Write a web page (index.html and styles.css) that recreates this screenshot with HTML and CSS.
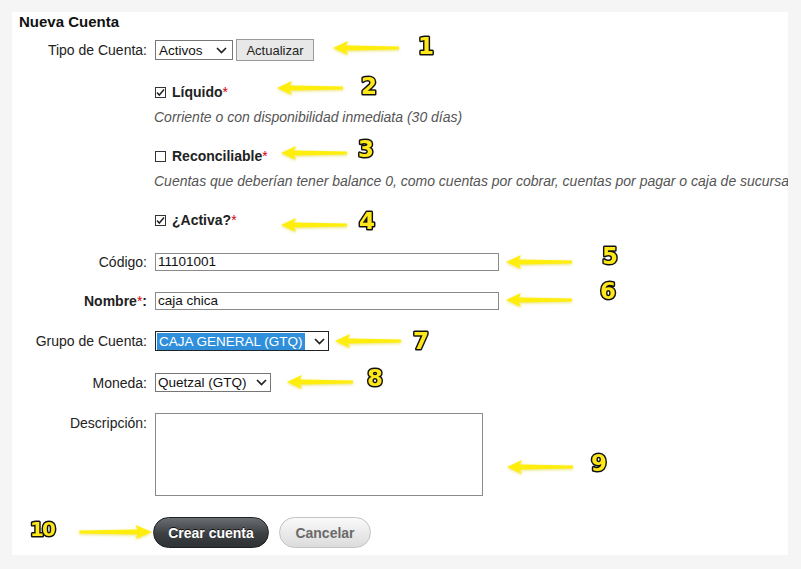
FILE: index.html
```html
<!DOCTYPE html>
<html lang="es">

<head>
  <meta charset="UTF-8">
  <meta name="viewport" content="width=device-width, initial-scale=1.0">
  <title>Nueva Cuenta</title>
  <link rel="stylesheet" href="styles.css">
</head>

<body>
  <div class="panel">
    <h2 class="title">Nueva Cuenta</h2>

    <div class="row row-type">
      <label class="label">Tipo de Cuenta:</label>
      <div class="field">
        <div class="select select-type">
          <span>Activos</span>
          <svg class="chevron" viewBox="0 0 11 7"><path d="M1 1l4.5 4.5L10 1" /></svg>
        </div>
        <button class="btn-plain">Actualizar</button>
      </div>
    </div>

    <div class="row row-check">
      <span></span>
      <div class="field">
        <span class="check"><svg viewBox="0 0 11 11"><path d="M2 5.5l2.3 2.5L9 2.5" /></svg></span>
        <b>Líquido</b><span class="req">*</span>
      </div>
    </div>
    <div class="row row-hint">
      <span></span>
      <div class="hint">Corriente o con disponibilidad inmediata (30 días)</div>
    </div>

    <div class="row row-check">
      <span></span>
      <div class="field">
        <span class="check"></span>
        <b>Reconciliable</b><span class="req">*</span>
      </div>
    </div>
    <div class="row row-hint">
      <span></span>
      <div class="hint">Cuentas que deberían tener balance 0, como cuentas por cobrar, cuentas por pagar o caja de sucursal</div>
    </div>

    <div class="row row-check">
      <span></span>
      <div class="field">
        <span class="check"><svg viewBox="0 0 11 11"><path d="M2 5.5l2.3 2.5L9 2.5" /></svg></span>
        <b>¿Activa?</b><span class="req">*</span>
      </div>
    </div>

    <div class="row row-code">
      <label class="label">Código:</label>
      <div class="input">11101001</div>
    </div>

    <div class="row">
      <label class="label"><b>Nombre</b><span class="req">*</span><b>:</b></label>
      <div class="input">caja chica</div>
    </div>

    <div class="row">
      <label class="label">Grupo de Cuenta:</label>
      <div class="field">
        <div class="select select-group">
          <span class="selected">CAJA GENERAL (GTQ)</span>
          <svg class="chevron" viewBox="0 0 11 7"><path d="M1 1l4.5 4.5L10 1" /></svg>
        </div>
      </div>
    </div>

    <div class="row row-money">
      <label class="label">Moneda:</label>
      <div class="field">
        <div class="select select-money">
          <span>Quetzal (GTQ)</span>
          <svg class="chevron" viewBox="0 0 11 7"><path d="M1 1l4.5 4.5L10 1" /></svg>
        </div>
      </div>
    </div>

    <div class="row row-text">
      <label class="label label-top">Descripción:</label>
      <div class="textarea"></div>
    </div>

    <div class="row row-actions">
      <span></span>
      <div class="field">
        <button class="btn btn-dark">Crear cuenta</button>
        <button class="btn btn-light">Cancelar</button>
      </div>
    </div>
  </div>

  <!-- callouts drawn over the form -->
  <svg class="callouts" width="801" height="569" viewBox="0 0 801 569">
    <defs>
      <filter id="glow" x="-20%" y="-80%" width="140%" height="260%">
        <feDropShadow dx="0" dy="1" stdDeviation="1.6" flood-color="#d9cc00" flood-opacity="0.55" />
      </filter>
      <path id="arrow" d="M0 0L15 -7L13 -2.6L66 -1.6L66 1.6L13 2.6L15 7Z" />
    </defs>
    <g class="arrows" filter="url(#glow)">
      <use href="#arrow" x="333" y="48" />
      <use href="#arrow" x="277" y="88" />
      <use href="#arrow" x="281" y="153" />
      <use href="#arrow" x="281" y="225" />
      <use href="#arrow" x="506" y="262" />
      <use href="#arrow" x="506" y="300" />
      <use href="#arrow" x="335" y="341" />
      <use href="#arrow" x="287" y="382" />
      <use href="#arrow" x="507" y="467" />
      <use href="#arrow" transform="translate(152 532) scale(-1.1 1)" />
    </g>
    <g class="nums">
      <text x="426" y="54">1</text>
      <text x="369" y="94">2</text>
      <text x="366" y="157">3</text>
      <text x="367" y="229">4</text>
      <text x="610" y="264">5</text>
      <text x="608" y="299">6</text>
      <text x="421" y="349">7</text>
      <text x="375" y="386">8</text>
      <text x="599" y="471">9</text>
      <text x="42" y="536" class="num-small">10</text>
    </g>
  </svg>
</body>

</html>
```

FILE: styles.css
```css
body {
  margin: 0;
  position: relative;
  background: #f5f5f5;
  font-family: "Liberation Sans", Arial, sans-serif;
  font-size: 14px;
  color: #222;
}

.panel {
  width: 776px;
  height: 543px;
  margin: 12px 0 0 12px;
  padding-top: 1px;
  box-sizing: border-box;
  background: #fff;
  overflow: hidden;
}

.title {
  margin: 0 0 0 7px;
  font-size: 15px;
  line-height: 18px;
  font-weight: bold;
  color: #111;
}

.row {
  display: grid;
  grid-template-columns: 135px 1fr;
  column-gap: 8px;
  align-items: center;
  margin-top: 21px;
}

.row-type { margin-top: 8px; }
.row-check { margin-top: 23px; line-height: 16px; }
.row-hint { margin-top: 9px; line-height: 16px; }
.row-code { margin-top: 25px; }
.row-money { margin-top: 22px; }
.row-text { align-items: start; }

.label {
  text-align: right;
  white-space: nowrap;
}

.label-top {
  padding-top: 2px;
}

.field {
  display: flex;
  align-items: center;
}

.req {
  color: #d00;
}

.hint {
  font-style: italic;
  color: #555;
  white-space: nowrap;
  margin-left: -1px;
}

.check {
  width: 11px;
  height: 11px;
  margin-right: 6px;
  border: 1px solid #333;
  box-sizing: border-box;
  background: #fff;
  display: inline-flex;
}

.check svg {
  width: 11px;
  height: 11px;
  margin: -1px;
  fill: none;
  stroke: #222;
  stroke-width: 1.5;
}

.select {
  display: inline-flex;
  align-items: center;
  justify-content: space-between;
  height: 20px;
  padding: 0 5px 0 3px;
  box-sizing: border-box;
  border: 1px solid #767676;
  background: #fff;
  font-size: 13.5px;
  color: #111;
}

.select-type { width: 78px; }
.select-money { width: 116px; height: 19px; padding-left: 2px; padding-right: 3px; }

.select-group {
  width: 174px;
  padding: 0 3px 0 1px;
  border-color: #222;
}

.selected {
  background: #2f8fdb;
  color: #fff;
  padding: 0 2px;
  line-height: 17px;
}

.chevron {
  width: 11px;
  height: 7px;
  fill: none;
  stroke: #222;
  stroke-width: 1.7;
}

.btn-plain {
  width: 78px;
  height: 22px;
  margin-left: 3px;
  padding: 0;
  border: 1px solid #999;
  background: #e8e8e8;
  font-family: inherit;
  font-size: 13px;
  color: #222;
}

.input {
  width: 344px;
  height: 18px;
  box-sizing: border-box;
  border: 1px solid #8a8a8a;
  padding: 0 2px;
  font-size: 13.5px;
  line-height: 16px;
  color: #111;
}

.textarea {
  width: 328px;
  height: 83px;
  box-sizing: border-box;
  border: 1px solid #8a8a8a;
}

.row-actions .field {
  margin-left: -2px;
  gap: 10px;
}

.btn {
  height: 31px;
  border-radius: 16px;
  padding: 0;
  font-family: inherit;
  font-size: 14px;
  font-weight: bold;
}

.btn-dark {
  width: 116px;
  border: 1px solid #1f2123;
  background: linear-gradient(#6a6e72, #3c3f42 55%, #2f3234);
  color: #fff;
  text-shadow: 0 -1px 0 #111;
}

.btn-light {
  width: 92px;
  border: 1px solid #c2c2c2;
  background: linear-gradient(#fafafa, #e9e9e9 55%, #dcdcdc);
  color: #6a6a6a;
}

.callouts {
  position: absolute;
  top: 0;
  left: 0;
  pointer-events: none;
}

.arrows {
  fill: #ffee10;
}

.nums text {
  font-family: "DejaVu Sans", sans-serif;
  font-weight: bold;
  font-size: 23px;
  text-anchor: middle;
  fill: #ffe81a;
  stroke: #111;
  stroke-width: 3;
  stroke-linejoin: round;
  paint-order: stroke;
}

.nums .num-small {
  font-size: 20px;
  letter-spacing: -2px;
}
```
